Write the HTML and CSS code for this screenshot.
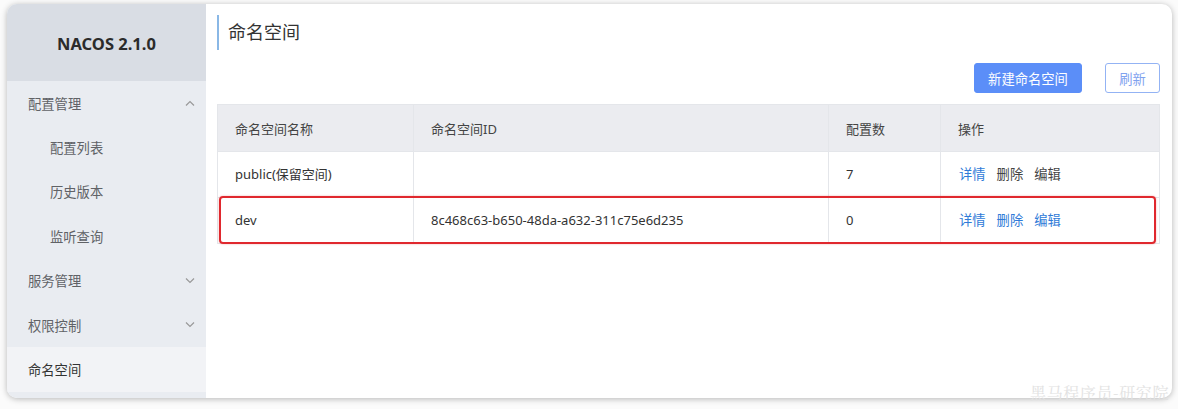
FILE: index.html
```html
<!DOCTYPE html>
<html lang="zh-CN">
<head>
<meta charset="utf-8">
<title>Nacos</title>
<link rel="stylesheet" href="styles.css">
</head>
<body>
<div class="window">
  <aside class="sidebar">
    <div class="brand">NACOS 2.1.0</div>
    <nav class="menu">
      <div class="item group">配置管理
        <svg class="chev" width="10" height="6" viewBox="0 0 10 6"><polyline points="1,5.5 5,1.5 9,5.5" fill="none" stroke="#999" stroke-width="1.2"/></svg>
      </div>
      <div class="item sub">配置列表</div>
      <div class="item sub">历史版本</div>
      <div class="item sub">监听查询</div>
      <div class="item group">服务管理
        <svg class="chev" width="10" height="6" viewBox="0 0 10 6"><polyline points="1,0.5 5,4.5 9,0.5" fill="none" stroke="#999" stroke-width="1.2"/></svg>
      </div>
      <div class="item group">权限控制
        <svg class="chev" width="10" height="6" viewBox="0 0 10 6"><polyline points="1,0.5 5,4.5 9,0.5" fill="none" stroke="#999" stroke-width="1.2"/></svg>
      </div>
      <div class="item group active">命名空间</div>
    </nav>
  </aside>
  <main class="content">
    <h1 class="title">命名空间</h1>
    <div class="toolbar">
      <button class="btn primary">新建命名空间</button>
      <button class="btn outline">刷新</button>
    </div>
    <div class="table">
      <div class="row head">
        <div class="cell">命名空间名称</div>
        <div class="cell">命名空间ID</div>
        <div class="cell">配置数</div>
        <div class="cell">操作</div>
      </div>
      <div class="row">
        <div class="cell">public(保留空间)</div>
        <div class="cell"></div>
        <div class="cell">7</div>
        <div class="cell ops"><a class="link">详情</a><a class="link muted">删除</a><a class="link muted">编辑</a></div>
      </div>
      <div class="row marked">
        <div class="cell">dev</div>
        <div class="cell">8c468c63-b650-48da-a632-311c75e6d235</div>
        <div class="cell">0</div>
        <div class="cell ops"><a class="link">详情</a><a class="link">删除</a><a class="link">编辑</a></div>
      </div>
    </div>
  </main>
</div>
<div class="watermark">黑马程序员-研究院</div>
</body>
</html>
```
FILE: styles.css
```css
* { box-sizing: border-box; }
html, body { height: 100%; }
body {
  margin: 0;
  padding: 4px 6px 11px 7px;
  background: #fbfbfb;
  font-family: "Noto Sans", "Noto Sans CJK SC", sans-serif;
  position: relative;
}
.window {
  display: flex;
  height: 394px;
  border-radius: 10px;
  overflow: hidden;
  background: #fff;
  box-shadow: 0 1px 6px rgba(0, 0, 0, 0.28);
}
.sidebar {
  width: 199px;
  flex: none;
  background: #e9ecf1;
  display: flex;
  flex-direction: column;
}
.brand {
  height: 77px;
  background: #d9dde4;
  display: flex;
  align-items: center;
  justify-content: center;
  font-family: "Noto Sans", sans-serif;
  font-weight: 700;
  font-size: 16.5px;
  color: #2b2b2b;
  padding-top: 2px;
}
.menu { display: flex; flex-direction: column; }
.item {
  height: 44.4px;
  display: flex;
  align-items: center;
  justify-content: space-between;
  font-size: 13.3px;
  color: #606266;
  padding: 0 11px 0 21px;
}
.item.sub { padding-left: 43px; }
.item.active {
  background: #f2f3f6;
  color: #333;
}
.chev { display: block; }
.content {
  flex: 1;
  padding: 11px 12px 0 11px;
  display: flex;
  flex-direction: column;
}
.title {
  margin: 0;
  height: 35px;
  border-left: 2px solid #8ab8e6;
  padding-left: 9px;
  font-weight: 400;
  font-size: 18px;
  line-height: 34px;
  color: #333;
}
.toolbar {
  display: flex;
  justify-content: flex-end;
  gap: 23px;
  margin-top: 13px;
  margin-bottom: 11px;
}
.btn {
  height: 30px;
  font-family: "Noto Sans CJK SC", sans-serif;
  font-size: 13.3px;
  border-radius: 3px;
  cursor: pointer;
}
.btn.primary {
  width: 108px;
  background: #5b8ef8;
  border: 1px solid #5b8ef8;
  color: #fff;
}
.btn.outline {
  width: 55px;
  background: #fff;
  border: 1px solid #93b3f4;
  color: #7fa2ef;
}
.table {
  border: 1px solid #e4e6ea;
  border-bottom: 0;
}
.row {
  display: grid;
  grid-template-columns: 196px 415px 112px 1fr;
  height: 46px;
  border-bottom: 1px solid #e4e6ea;
  position: relative;
}
.row.head {
  height: 47px;
  background: #ebecf0;
}
.cell {
  display: flex;
  align-items: center;
  padding-left: 17px;
  padding-bottom: 2px;
  font-size: 13px;
  color: #333;
  border-right: 1px solid #e4e6ea;
}
.cell:last-child { border-right: 0; }
.row.head .cell { color: #444; padding-bottom: 0; }
.ops { gap: 11px; padding-left: 18px; }
.link { color: #2f7bd8; font-size: 13.3px; }
.link.muted { color: #444; }
.row.marked::after {
  content: "";
  position: absolute;
  left: 1px;
  right: 3px;
  top: -2px;
  bottom: -1px;
  border: 2px solid #e0282e;
  border-radius: 4px;
  box-shadow: 0 0 2px rgba(224, 40, 46, 0.4);
}
.watermark {
  position: absolute;
  right: 9px;
  bottom: 6px;
  line-height: 20px;
  font-family: "Noto Serif CJK SC", "Liberation Serif", serif;
  font-size: 16px;
  letter-spacing: 0.6px;
  color: #e2e2e2;
}
```
